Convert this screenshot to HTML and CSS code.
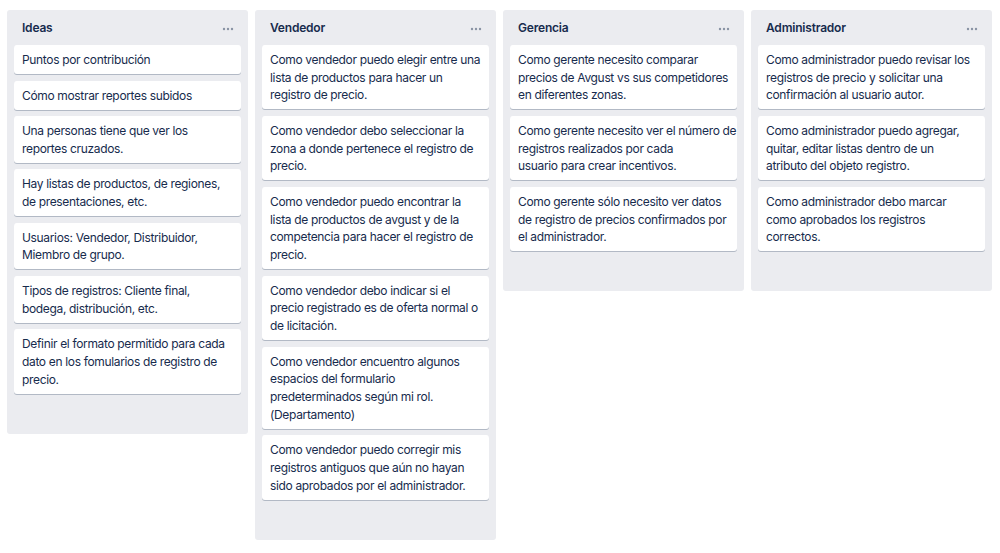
FILE: index.html
```html
<!DOCTYPE html>
<html lang="es">
<head>
<meta charset="utf-8">
<title>Tablero</title>
<link rel="stylesheet" href="styles.css">
</head>
<body>
<div class="board">
  <section class="list">
    <header class="list-header">
      <h2 class="list-title">Ideas</h2>
      <span class="list-menu"><svg width="12" height="4" viewBox="0 0 12 4"><circle cx="2" cy="2" r="1.2"/><circle cx="6" cy="2" r="1.2"/><circle cx="10" cy="2" r="1.2"/></svg></span>
    </header>
    <div class="cards">
      <div class="card">Puntos por contribución</div>
      <div class="card">Cómo mostrar reportes subidos</div>
      <div class="card">Una personas tiene que ver los<br>reportes cruzados.</div>
      <div class="card">Hay listas de productos, de regiones,<br>de presentaciones, etc.</div>
      <div class="card">Usuarios: Vendedor, Distribuidor,<br>Miembro de grupo.</div>
      <div class="card">Tipos de registros: Cliente final,<br>bodega, distribución, etc.</div>
      <div class="card">Definir el formato permitido para cada<br>dato en los fomularios de registro de<br>precio.</div>
    </div>
  </section>
  <section class="list">
    <header class="list-header">
      <h2 class="list-title">Vendedor</h2>
      <span class="list-menu"><svg width="12" height="4" viewBox="0 0 12 4"><circle cx="2" cy="2" r="1.2"/><circle cx="6" cy="2" r="1.2"/><circle cx="10" cy="2" r="1.2"/></svg></span>
    </header>
    <div class="cards">
      <div class="card">Como vendedor puedo elegir entre una<br>lista de productos para hacer un<br>registro de precio.</div>
      <div class="card">Como vendedor debo seleccionar la<br>zona a donde pertenece el registro de<br>precio.</div>
      <div class="card">Como vendedor puedo encontrar la<br>lista de productos de avgust y de la<br>competencia para hacer el registro de<br>precio.</div>
      <div class="card">Como vendedor debo indicar si el<br>precio registrado es de oferta normal o<br>de licitación.</div>
      <div class="card">Como vendedor encuentro algunos<br>espacios del formulario<br>predeterminados según mi rol.<br>(Departamento)</div>
      <div class="card">Como vendedor puedo corregir mis<br>registros antiguos que aún no hayan<br>sido aprobados por el administrador.</div>
    </div>
  </section>
  <section class="list">
    <header class="list-header">
      <h2 class="list-title">Gerencia</h2>
      <span class="list-menu"><svg width="12" height="4" viewBox="0 0 12 4"><circle cx="2" cy="2" r="1.2"/><circle cx="6" cy="2" r="1.2"/><circle cx="10" cy="2" r="1.2"/></svg></span>
    </header>
    <div class="cards">
      <div class="card">Como gerente necesito comparar<br>precios de Avgust vs sus competidores<br>en diferentes zonas.</div>
      <div class="card">Como gerente necesito ver el número de<br>registros realizados por cada<br>usuario para crear incentivos.</div>
      <div class="card">Como gerente sólo necesito ver datos<br>de registro de precios confirmados por<br>el administrador.</div>
    </div>
  </section>
  <section class="list">
    <header class="list-header">
      <h2 class="list-title">Administrador</h2>
      <span class="list-menu"><svg width="12" height="4" viewBox="0 0 12 4"><circle cx="2" cy="2" r="1.2"/><circle cx="6" cy="2" r="1.2"/><circle cx="10" cy="2" r="1.2"/></svg></span>
    </header>
    <div class="cards">
      <div class="card">Como administrador puedo revisar los<br>registros de precio y solicitar una<br>confirmación al usuario autor.</div>
      <div class="card">Como administrador puedo agregar,<br>quitar, editar listas dentro de un<br>atributo del objeto registro.</div>
      <div class="card">Como administrador debo marcar<br>como aprobados los registros<br>correctos.</div>
    </div>
  </section>
</div>
</body>
</html>
```

FILE: styles.css
```css
* { box-sizing: border-box; }
html, body {
  margin: 0;
  padding: 0;
  background: #ffffff;
}
body {
  font-family: Inter, "Noto Sans", "Liberation Sans", sans-serif;
  color: #172b4d;
  width: 1000px;
  height: 553px;
  overflow: hidden;
}
.board {
  display: flex;
  align-items: flex-start;
  gap: 7px;
  padding: 10px 0 0 7px;
}
.list {
  width: 241px;
  flex: 0 0 241px;
  background: #ebecf0;
  border-radius: 3px;
  padding: 0 7px 40px;
}
.list-header {
  display: flex;
  align-items: center;
  justify-content: space-between;
  height: 35px;
  padding: 0 7px 0 8px;
}
.list-title {
  margin: 0;
  font-size: 12px;
  font-weight: 600;
  letter-spacing: -0.2px;
  line-height: 17px;
  color: #172b4d;
}
.list-menu {
  display: flex;
  align-items: center;
  fill: #8993a4;
  padding-top: 3px;
}
.cards {
  display: flex;
  flex-direction: column;
  gap: 6.6px;
}
.card {
  background: #ffffff;
  border-radius: 3px;
  box-shadow: 0 1px 0 rgba(9, 30, 66, 0.25);
  padding: 6px 4px 5.3px 8px;
  font-size: 12px;
  letter-spacing: -0.34px;
  line-height: 17.7px;
  white-space: nowrap;
  color: #172b4d;
}
```
